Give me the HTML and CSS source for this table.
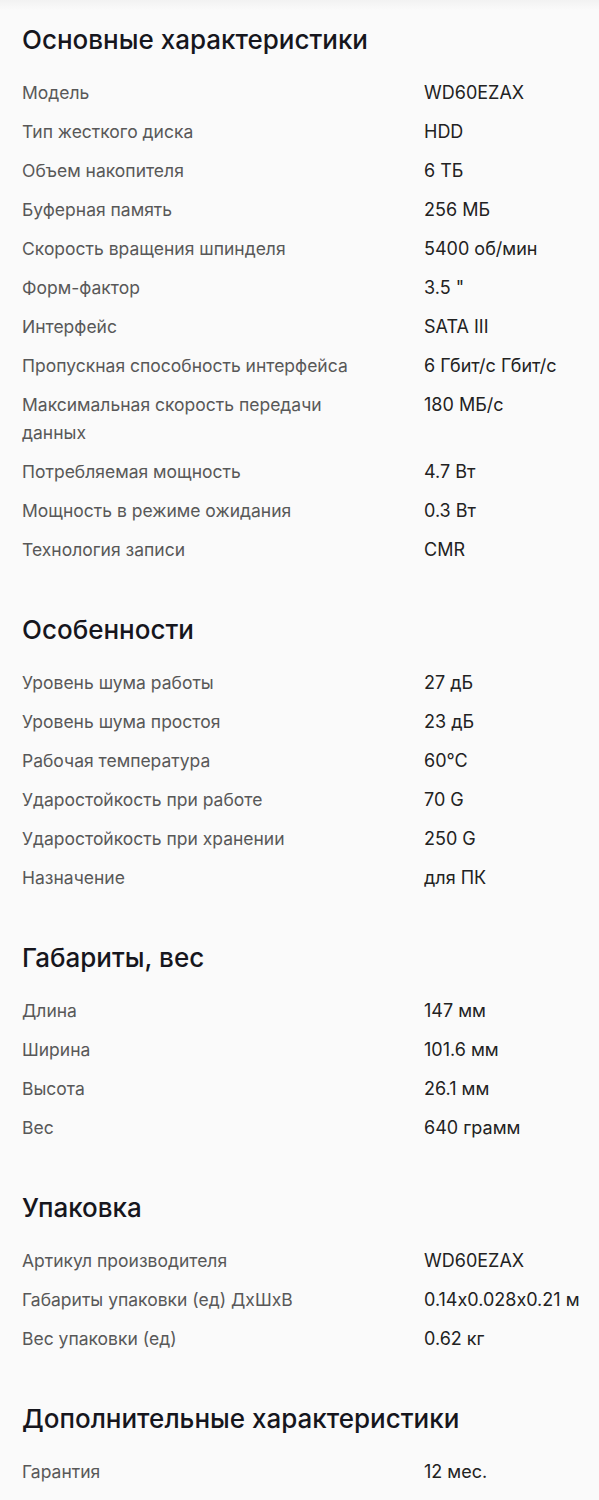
FILE: index.html
```html
<!DOCTYPE html>
<html lang="ru">
<head>
    <meta charset="UTF-8">
    <meta name="viewport" content="width=device-width, initial-scale=1.0">
    <title>Характеристики - WD60EZAX</title>
    <link rel="stylesheet" href="styles.css">
</head>
<body>
    <div class="top-strip"></div>
    <div class="specs">
        <!-- Основные -->
        <section class="spec-group">
            <h2>Основные характеристики</h2>
            <dl class="spec-list">
                <dt>Модель</dt><dd>WD60EZAX</dd>
                <dt>Тип жесткого диска</dt><dd>HDD</dd>
                <dt>Объем накопителя</dt><dd>6 ТБ</dd>
                <dt>Буферная память</dt><dd>256 МБ</dd>
                <dt>Скорость вращения шпинделя</dt><dd>5400 об/мин</dd>
                <dt>Форм-фактор</dt><dd>3.5 "</dd>
                <dt>Интерфейс</dt><dd>SATA III</dd>
                <dt>Пропускная способность интерфейса</dt><dd>6 Гбит/с Гбит/с</dd>
                <dt>Максимальная скорость передачи данных</dt><dd>180 МБ/с</dd>
                <dt>Потребляемая мощность</dt><dd>4.7 Вт</dd>
                <dt>Мощность в режиме ожидания</dt><dd>0.3 Вт</dd>
                <dt>Технология записи</dt><dd>CMR</dd>
            </dl>
        </section>

        <section class="spec-group">
            <h2>Особенности</h2>
            <dl class="spec-list">
                <dt>Уровень шума работы</dt><dd>27 дБ</dd>
                <dt>Уровень шума простоя</dt><dd>23 дБ</dd>
                <dt>Рабочая температура</dt><dd>60°C</dd>
                <dt>Ударостойкость при работе</dt><dd>70 G</dd>
                <dt>Ударостойкость при хранении</dt><dd>250 G</dd>
                <dt>Назначение</dt><dd>для ПК</dd>
            </dl>
        </section>

        <section class="spec-group">
            <h2>Габариты, вес</h2>
            <dl class="spec-list">
                <dt>Длина</dt><dd>147 мм</dd>
                <dt>Ширина</dt><dd>101.6 мм</dd>
                <dt>Высота</dt><dd>26.1 мм</dd>
                <dt>Вес</dt><dd>640 грамм</dd>
            </dl>
        </section>

        <section class="spec-group">
            <h2>Упаковка</h2>
            <dl class="spec-list">
                <dt>Артикул производителя</dt><dd>WD60EZAX</dd>
                <dt>Габариты упаковки (ед) ДхШхВ</dt><dd>0.14x0.028x0.21 м</dd>
                <dt>Вес упаковки (ед)</dt><dd>0.62 кг</dd>
            </dl>
        </section>

        <section class="spec-group">
            <h2>Дополнительные характеристики</h2>
            <dl class="spec-list">
                <dt>Гарантия</dt><dd>12 мес.</dd>
            </dl>
        </section>
    </div>
</body>
</html>
```

FILE: styles.css
```css
/* Page */
body {
    margin: 0;
    padding: 0;
    background-color: #fafafa;
    font-family: Inter, "Noto Sans", sans-serif;
    font-feature-settings: "calt" 0;
    color: #222;
}

.top-strip {
    height: 10px;
    background: linear-gradient(#f2f2f2, #fafafa);
}

.specs {
    padding: 14px 22px 0 22px;
}

/* Groups */
.spec-group {
    margin-bottom: 50px;
}

.spec-group h2 {
    margin: 0 0 23px 0;
    font-size: 26px;
    line-height: 32px;
    font-weight: 500;
    color: #16161d;
}

/* Rows */
.spec-list {
    display: grid;
    grid-template-columns: 350px 1fr;
    column-gap: 52px;
    row-gap: 11px;
    margin: 0;
}

.spec-list dt {
    font-size: 17.5px;
    line-height: 28px;
    color: #585858;
}

.spec-list dd {
    margin: 0;
    font-size: 18px;
    line-height: 28px;
    white-space: nowrap;
    color: #222;
}
```
